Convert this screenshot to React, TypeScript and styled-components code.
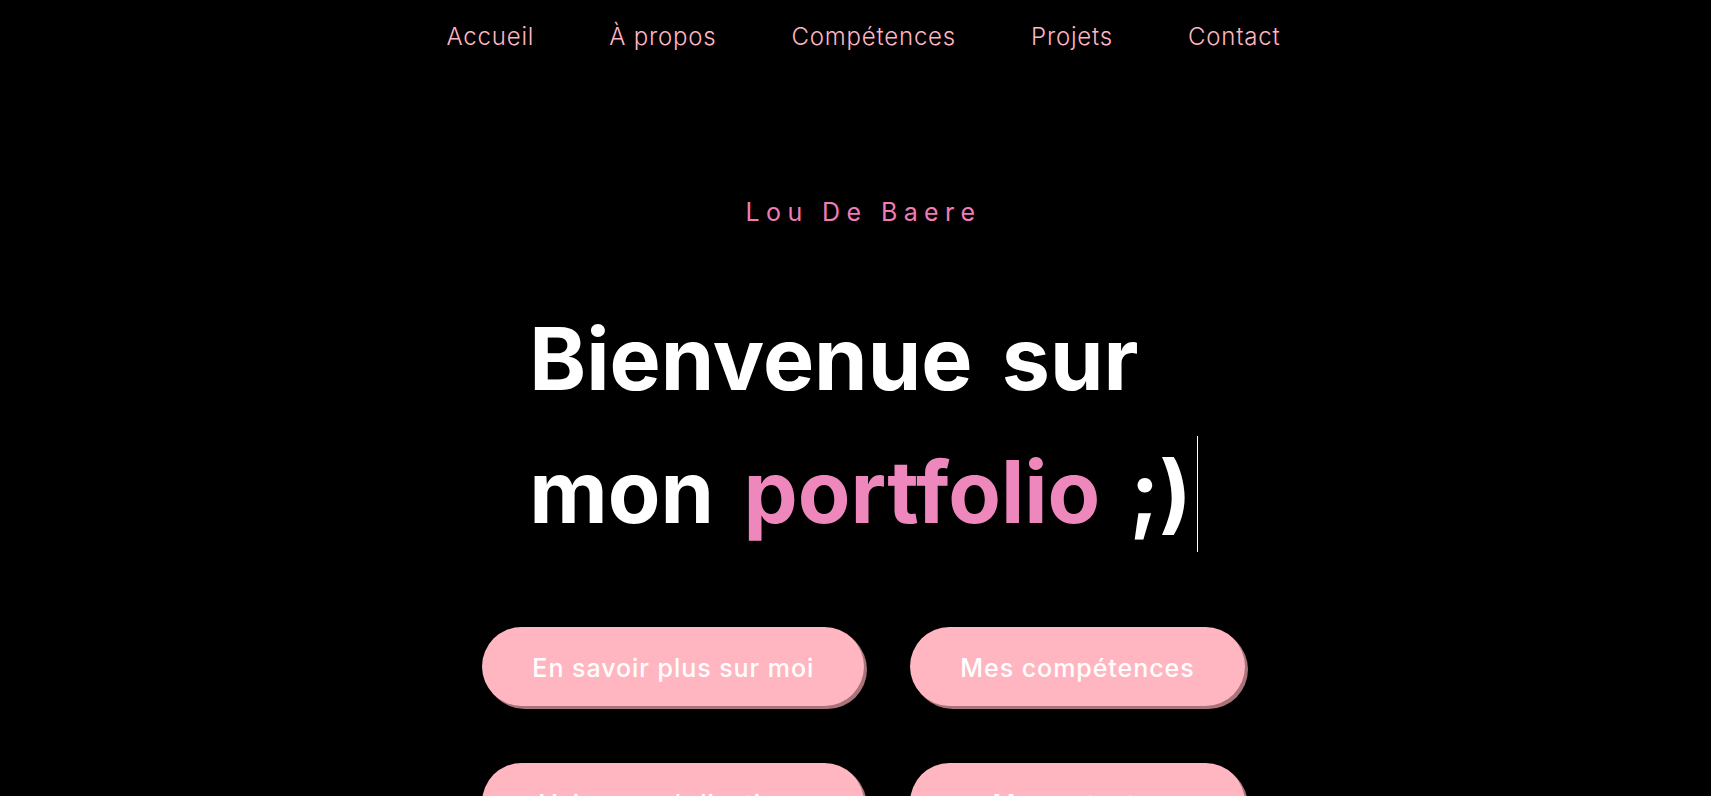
import React from "react";
import styled, { createGlobalStyle } from "styled-components";

const GlobalStyle = createGlobalStyle`
  html, body {
    margin: 0;
    padding: 0;
    background: #000;
  }
  body {
    font-family: "Inter", "Noto Sans", sans-serif;
    overflow-x: hidden;
  }
  * { box-sizing: border-box; }
`;

const Page = styled.div`
  min-height: 100vh;
  background: #000;
  padding-left: 16px;
  display: flex;
  flex-direction: column;
  align-items: center;
`;

const Nav = styled.nav`
  display: flex;
  justify-content: center;
  gap: 75px;
  padding: 22px 0;
`;

const NavLink = styled.a`
  font-family: "Inter", "Noto Sans", sans-serif;
  font-weight: 300;
  font-size: 24px;
  line-height: 30px;
  letter-spacing: 0.8px;
  color: #ffb6c1;
  text-decoration: none;
  cursor: pointer;
`;

const Hero = styled.section`
  display: flex;
  flex-direction: column;
  align-items: center;
  padding-top: 123px;
`;

const Name = styled.p`
  margin: 0;
  font-family: "Inter", "Noto Sans", sans-serif;
  font-weight: 400;
  font-size: 25px;
  line-height: 30px;
  letter-spacing: 6.4px;
  color: #f07cb6;
`;

const Title = styled.h1`
  margin: 66px 0 0;
  font-family: "Inter", "Noto Sans", sans-serif;
  font-weight: 700;
  font-size: 86px;
  line-height: 133px;
  word-spacing: 9px;
  color: #fff;
  text-align: left;
`;

const Accent = styled.span`
  color: #ee88bc;
`;

const Cursor = styled.span`
  display: inline-block;
  width: 1px;
  height: 116px;
  margin-left: 5px;
  background: #fff;
  vertical-align: -29px;
`;

const Buttons = styled.div`
  margin-top: 68px;
  display: grid;
  grid-template-columns: auto auto;
  column-gap: 46px;
  row-gap: 57px;
`;

const Button = styled.a`
  display: flex;
  align-items: center;
  justify-content: center;
  height: 79px;
  padding: 3px 50px 0;
  border-radius: 40px;
  background: #ffb6c1;
  box-shadow: 3px 3px 0 #a8737b;
  color: #fff;
  font-family: "Inter", "Noto Sans", sans-serif;
  font-weight: 500;
  font-size: 25px;
  letter-spacing: 0.95px;
  white-space: nowrap;
  text-decoration: none;
  cursor: pointer;
`;

export default function App() {
  const links = ["Accueil", "À propos", "Compétences", "Projets", "Contact"];
  const buttons = [
    "En savoir plus sur moi",
    "Mes compétences",
    "Voir mes réalisations",
    "Me contacter",
  ];
  return (
    <>
      <GlobalStyle />
      <Page>
        <Nav>
          {links.map((l) => (
            <NavLink key={l}>{l}</NavLink>
          ))}
        </Nav>
        <Hero>
          <Name>Lou De Baere</Name>
          <Title>
            Bienvenue sur
            <br />
            mon <Accent>portfolio</Accent> ;)
            <Cursor />
          </Title>
          <Buttons>
            {buttons.map((b) => (
              <Button key={b}>{b}</Button>
            ))}
          </Buttons>
        </Hero>
      </Page>
    </>
  );
}
